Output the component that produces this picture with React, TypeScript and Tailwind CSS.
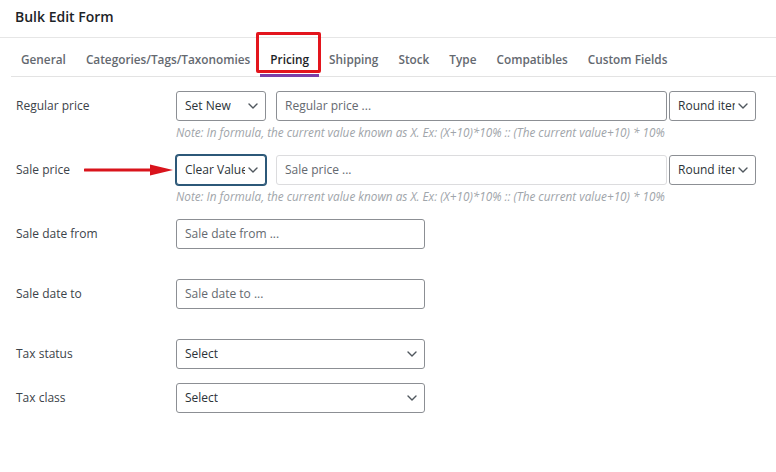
import React from "react";

const Chevron = ({ className = "" }: { className?: string }) => (
  <svg width="10" height="6" viewBox="0 0 10 6" className={className} fill="none">
    <path d="M1 1 L5 5 L9 1" stroke="#50575e" strokeWidth="1.4" strokeLinecap="round" strokeLinejoin="round" />
  </svg>
);

const Select = ({ label, w, focused = false }: { label: string; w: string; focused?: boolean }) => (
  <div
    className={`${w} h-[30px] shrink-0 flex items-center justify-between pl-2 pr-[7px] rounded-[3px] bg-white border ${
      focused ? "border-[#2c5878] shadow-[0_0_0_1px_#2c5878]" : "border-[#8c8f94]"
    }`}
  >
    <span className="text-[12px] text-[#2c3338] whitespace-nowrap overflow-hidden">{label}</span>
    <Chevron className="shrink-0 ml-[3px]" />
  </div>
);

const Input = ({ placeholder, w, light = false }: { placeholder: string; w: string; light?: boolean }) => (
  <div
    className={`${w} h-[30px] shrink-0 flex items-center px-2 rounded-[3px] bg-white border ${
      light ? "border-[#dcdcde]" : "border-[#8c8f94]"
    }`}
  >
    <span className="text-[12px] text-[#646970] whitespace-nowrap">{placeholder}</span>
  </div>
);

const Note = () => (
  <div className="text-[11.75px] italic text-[#a0a5aa] mt-[3px] whitespace-nowrap">
    Note: In formula, the current value known as X. Ex: (X+10)*10% :: (The current value+10) * 10%
  </div>
);

const Label = ({ children }: { children: React.ReactNode }) => (
  <div className="w-[176px] shrink-0 pl-4 h-[30px] flex items-center text-[12px] text-[#3c434a]">{children}</div>
);

const tabs = ["General", "Categories/Tags/Taxonomies", "Pricing", "Shipping", "Stock", "Type", "Compatibles", "Custom Fields"];

export default function App() {
  return (
    <div
      className="w-[776px] h-[472px] bg-white relative overflow-hidden"
      style={{ fontFamily: '"Open Sans", "Noto Sans", sans-serif' }}
    >
      <div className="h-[38px] px-[15px] flex items-center border-b border-[#e6e6e6] pb-[4px]">
        <span className="text-[14px] font-semibold text-[#1d2327]">Bulk Edit Form</span>
      </div>
      <div className="ml-[11px] h-[39px] flex items-stretch border-b border-[#e3e3e3]">
        {tabs.map((t) => {
          const active = t === "Pricing";
          return (
            <div
              key={t}
              className={`relative px-[10px] flex items-center pt-[5px] text-[11.8px] font-semibold whitespace-nowrap ${
                active ? "text-[#1d2327]" : "text-[#646970]"
              }`}
            >
              {t}
              {active && (
                <>
                  <div className="absolute left-0 right-0 bottom-[-1px] h-[3px] bg-[#7b3fa8]" />
                  <div className="absolute left-[-4px] right-[-2px] top-[-6px] bottom-[3px] border-[3px] border-[#e3151d] rounded-[2px]" />
                </>
              )}
            </div>
          );
        })}
      </div>

      <div className="pt-[14px]">
        <div className="flex">
          <Label>Regular price</Label>
          <div>
            <div className="flex">
              <Select label="Set New" w="w-[90px]" />
              <div className="w-[10px]" />
              <Input placeholder="Regular price ..." w="w-[391px]" />
              <div className="w-[2px]" />
              <Select label="Round item" w="w-[87px]" />
            </div>
            <Note />
          </div>
        </div>

        <div className="flex mt-[13px] relative">
          <Label>Sale price</Label>
          <div>
            <div className="flex">
              <Select label="Clear Value" w="w-[90px]" focused />
              <div className="w-[10px]" />
              <Input placeholder="Sale price ..." w="w-[391px]" light />
              <div className="w-[2px]" />
              <Select label="Round item" w="w-[87px]" />
            </div>
            <Note />
          </div>
          <svg className="absolute left-[84px] top-[9px]" width="90" height="12" viewBox="0 0 90 12">
            <line x1="1" y1="6" x2="70" y2="6" stroke="#d9141c" strokeWidth="3" strokeLinecap="round" />
            <polygon points="66,0.5 89,6 66,11.5" fill="#d9141c" />
          </svg>
        </div>

        <div className="flex mt-[14px]">
          <Label>Sale date from</Label>
          <Input placeholder="Sale date from ..." w="w-[249px]" />
        </div>

        <div className="flex mt-[30px]">
          <Label>Sale date to</Label>
          <Input placeholder="Sale date to ..." w="w-[249px]" />
        </div>

        <div className="flex mt-[30px]">
          <Label>Tax status</Label>
          <Select label="Select" w="w-[249px]" />
        </div>

        <div className="flex mt-[14px]">
          <Label>Tax class</Label>
          <Select label="Select" w="w-[249px]" />
        </div>
      </div>
    </div>
  );
}
